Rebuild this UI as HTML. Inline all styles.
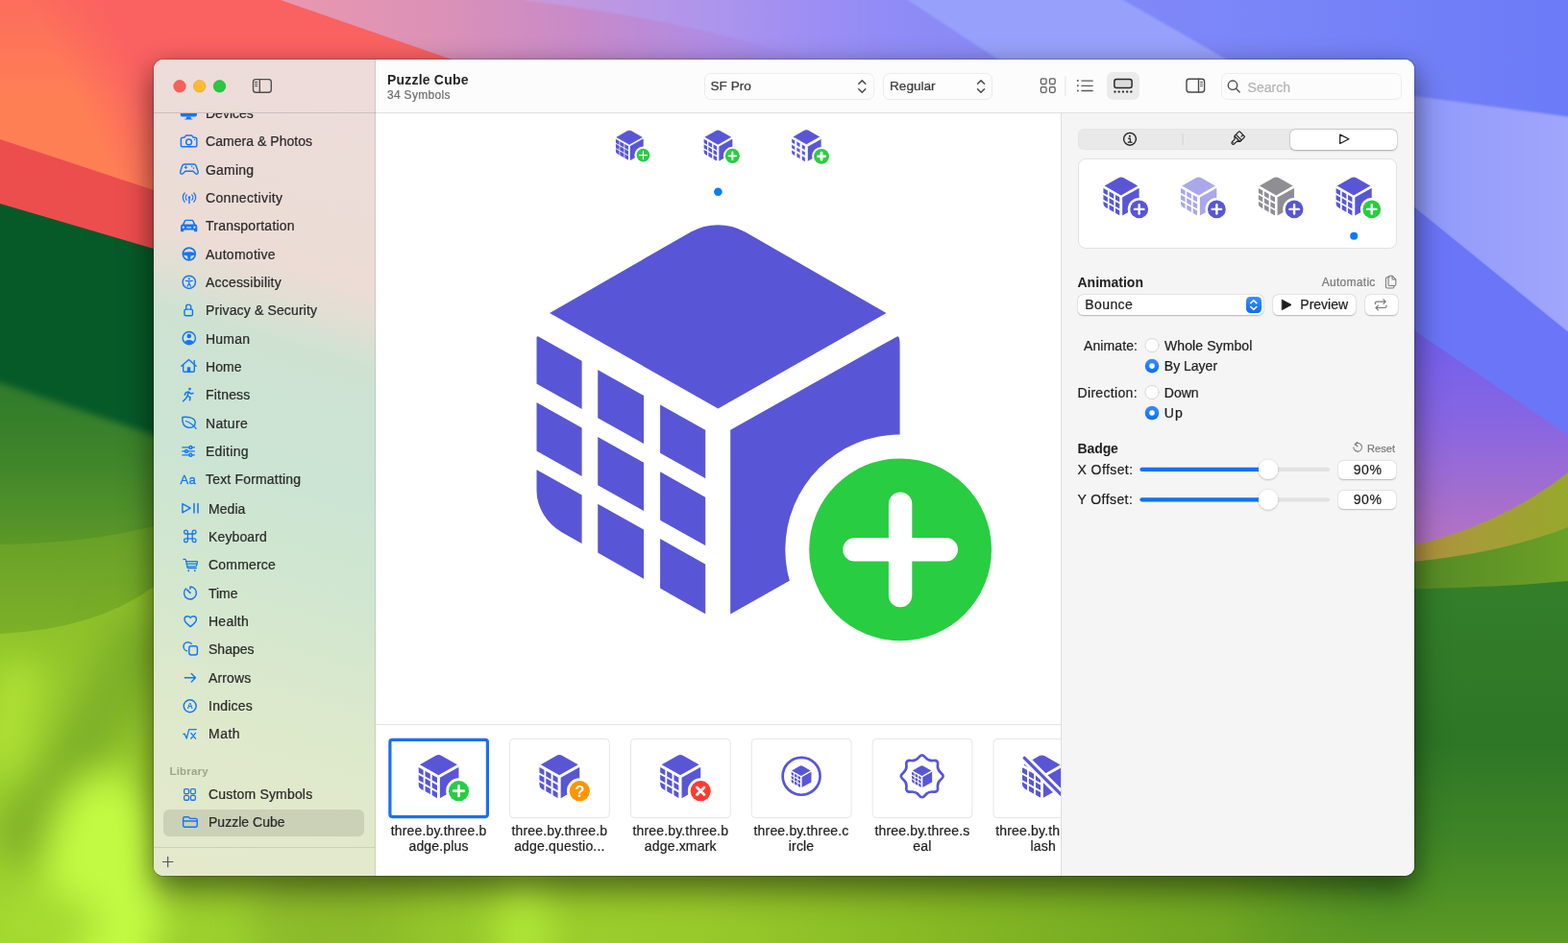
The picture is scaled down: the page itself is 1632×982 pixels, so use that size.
<!DOCTYPE html>
<html lang="en">
<head>
<meta charset="utf-8">
<title>SF Symbols – Puzzle Cube</title>
<style>
html,body{margin:0;padding:0}
body{width:1632px;height:982px;overflow:hidden;position:relative;background:#7682f8;font-family:"Liberation Sans",sans-serif;color:#262626;-webkit-text-stroke:.22px currentColor}
#bg{position:absolute;left:0;top:0;width:1632px;height:982px;display:block}
#shadow{position:absolute;left:160px;top:62px;width:1312px;height:850px;border-radius:10px;box-shadow:0 15px 32px 2px rgba(0,0,0,.42),0 3px 24px rgba(0,0,0,.15),0 0 0 1px rgba(0,0,0,.18)}
#win{position:absolute;left:160px;top:62px;width:1312px;height:850px;border-radius:10px;overflow:hidden;background:#fff;will-change:transform}
.abs{position:absolute}
svg{display:block}
/* sidebar */
#sidebar{position:absolute;left:0;top:0;width:231px;height:850px;overflow:hidden;
background:linear-gradient(197deg,#eddcda 0%,#ecdcd5 26.5%,#dfdfd3 31%,#cfe2d2 35%,#cbe4d3 50%,#d3e7cf 65%,#dee9cb 80%,#e5e9cc 100%)}
#sidebar .edge{position:absolute;left:230px;top:0;width:1px;height:850px;background:rgba(0,0,0,.10)}
#sbtop{position:absolute;left:0;top:0;width:231px;height:55px;border-bottom:1px solid rgba(0,0,0,.13)}
#sblist{position:absolute;left:0;top:56px;width:231px;height:794px;overflow:hidden}
.row{position:absolute;left:54px;height:20px;line-height:20px;font-size:14px;color:#2a2a2a;white-space:nowrap}
.row.s{left:57px}
#sbicons{position:absolute;left:0;top:0}
.sel{position:absolute;left:10px;top:724.5px;width:209px;height:28.5px;border-radius:6px;background:rgba(0,0,0,.10)}
.lib{-webkit-text-stroke:0;position:absolute;left:16.5px;top:677px;letter-spacing:.2px;font-size:11.5px;font-weight:bold;color:rgba(60,70,50,.42);line-height:16px}
#sbfoot{position:absolute;left:0;width:230px;height:1px;background:rgba(0,0,0,.10)}
/* toolbar */
#toolbar{position:absolute;left:231px;top:0;width:1081px;height:55px;background:#fcfcfc;border-bottom:1px solid #e0e0e0}
.ttl{-webkit-text-stroke:0;position:absolute;left:12px;top:11px;letter-spacing:.2px;font-size:14px;font-weight:bold;line-height:20px;color:#262626;white-space:nowrap}
.sub{position:absolute;left:12px;top:29px;letter-spacing:.3px;font-size:12px;line-height:16px;color:#6e6e6e;white-space:nowrap}
.pop{position:absolute;top:13.5px;height:28px;border:1px solid #ececec;border-radius:7px;background:#fdfdfd;box-sizing:border-box;font-size:13.6px;line-height:26px;color:#3a3a3a;padding-left:6px;white-space:nowrap}
.srch{font-size:14px;line-height:20px;color:#b4b4b4;white-space:nowrap}
/* main */
#canvas{position:absolute;left:231px;top:56px;width:713px;height:794px;background:#fff;overflow:hidden}
.lbl{position:absolute;top:738.5px;width:124.5px;text-align:center;font-size:14px;line-height:16.6px;color:#1e1e1e;white-space:nowrap;letter-spacing:.17px}
#inspector{position:absolute;left:944px;top:56px;width:368px;height:794px;background:#f5f5f5;border-left:1px solid #dcdcdc;box-sizing:border-box;overflow:hidden}
</style>
</head>
<body>
<svg id="bg" width="1632" height="982" viewBox="0 0 1632 982">
<defs>
<linearGradient id="gTop" x1="0" y1="0" x2="1632" y2="0" gradientUnits="userSpaceOnUse">
<stop offset="0" stop-color="#e897ae"/><stop offset=".184" stop-color="#e897ae"/><stop offset=".276" stop-color="#dc92b6"/><stop offset=".368" stop-color="#c88ac8"/><stop offset=".441" stop-color="#b38be0"/><stop offset=".509" stop-color="#9e8cf3"/><stop offset=".576" stop-color="#8e8bf6"/><stop offset=".797" stop-color="#7a86f8"/><stop offset="1" stop-color="#6b7bf7"/>
</linearGradient>
<linearGradient id="gBandR" x1="1400" y1="0" x2="1632" y2="0" gradientUnits="userSpaceOnUse"><stop offset="0" stop-color="#8895fa"/><stop offset="1" stop-color="#a1a6fc"/></linearGradient>
<linearGradient id="gPurple" x1="0" y1="340" x2="0" y2="575" gradientUnits="userSpaceOnUse"><stop offset="0" stop-color="#6f5ff0"/><stop offset=".45" stop-color="#8a66e0"/><stop offset="1" stop-color="#b874c0"/></linearGradient>
<linearGradient id="gOlive" x1="1440" y1="0" x2="1632" y2="0" gradientUnits="userSpaceOnUse"><stop offset="0" stop-color="#b48845"/><stop offset=".5" stop-color="#a69c38"/><stop offset="1" stop-color="#98a82c"/></linearGradient>
<linearGradient id="gMidG" x1="1440" y1="0" x2="1632" y2="0" gradientUnits="userSpaceOnUse"><stop offset="0" stop-color="#4f8426"/><stop offset="1" stop-color="#6ba126"/></linearGradient>
<linearGradient id="gDarkR" x1="0" y1="600" x2="0" y2="982" gradientUnits="userSpaceOnUse"><stop offset="0" stop-color="#347f2a"/><stop offset=".45" stop-color="#2d7626"/><stop offset=".72" stop-color="#3f8526"/><stop offset="1" stop-color="#5c9a24"/></linearGradient>
<linearGradient id="gOrange" x1="150" y1="80" x2="85" y2="112" gradientUnits="userSpaceOnUse"><stop offset="0" stop-color="#fa6161"/><stop offset="1" stop-color="#ff7f55"/></linearGradient>
<linearGradient id="gLeftG" x1="0" y1="400" x2="0" y2="982" gradientUnits="userSpaceOnUse"><stop offset="0" stop-color="#3d892c"/><stop offset=".28" stop-color="#6aa428"/><stop offset=".45" stop-color="#82b728"/><stop offset=".7" stop-color="#9acc2c"/><stop offset="1" stop-color="#a4d82e"/></linearGradient>
<linearGradient id="gBottom" x1="0" y1="0" x2="1632" y2="0" gradientUnits="userSpaceOnUse"><stop offset="0" stop-color="#9cd02e"/><stop offset=".19" stop-color="#9cd02e"/><stop offset=".25" stop-color="#90c02a"/><stop offset=".33" stop-color="#9ccf2e"/><stop offset=".45" stop-color="#98c92b"/><stop offset=".6" stop-color="#86b824"/><stop offset=".78" stop-color="#6fa622"/><stop offset=".82" stop-color="#66a022" stop-opacity=".8"/><stop offset=".89" stop-color="#5a9824" stop-opacity="0"/><stop offset="1" stop-color="#4e8a22" stop-opacity="0"/></linearGradient>
<radialGradient id="gGlow" cx="112" cy="905" r="170" gradientUnits="userSpaceOnUse"><stop offset="0" stop-color="#c2fa42"/><stop offset=".5" stop-color="#b8f03c" stop-opacity=".8"/><stop offset="1" stop-color="#a0d42e" stop-opacity="0"/></radialGradient>
<linearGradient id="gLeftA" x1="0" y1="400" x2="0" y2="580" gradientUnits="userSpaceOnUse"><stop offset="0" stop-color="#2f7a2a"/><stop offset=".45" stop-color="#3f8529"/><stop offset="1" stop-color="#609b28"/></linearGradient>
<linearGradient id="gLeftC" x1="0" y1="610" x2="0" y2="800" gradientUnits="userSpaceOnUse"><stop offset="0" stop-color="#8cbf2a"/><stop offset="1" stop-color="#9cd02e"/></linearGradient>
<linearGradient id="gLeftB" x1="0" y1="550" x2="0" y2="670" gradientUnits="userSpaceOnUse"><stop offset="0" stop-color="#67a028"/><stop offset="1" stop-color="#7eb228"/></linearGradient>
<filter id="b18" x="-50%" y="-50%" width="200%" height="200%"><feGaussianBlur stdDeviation="18"/></filter>
<linearGradient id="gLav" x1="545" y1="0" x2="960" y2="0" gradientUnits="userSpaceOnUse"><stop offset="0" stop-color="#c79fe2" stop-opacity=".75"/><stop offset=".5" stop-color="#ab97f0" stop-opacity=".8"/><stop offset="1" stop-color="#8e8bf6" stop-opacity="0"/></linearGradient>
<linearGradient id="gCorFade" x1="0" y1="0" x2="0" y2="100" gradientUnits="userSpaceOnUse"><stop offset="0" stop-color="#fa6161" stop-opacity=".6"/><stop offset="1" stop-color="#fa6161" stop-opacity="0"/></linearGradient>
<filter id="b5" x="-5%" y="-5%" width="110%" height="110%"><feGaussianBlur stdDeviation="3.5"/></filter>
<filter id="b2" x="-5%" y="-5%" width="110%" height="110%"><feGaussianBlur stdDeviation="1.2"/></filter>
</defs>
<rect x="0" y="0" width="1632" height="982" fill="url(#gTop)"/>
<path d="M545,0Q720,22 850,64L1000,64V-20H545Z" fill="url(#gLav)" filter="url(#b2)"/>
<polygon points="915,-20 1134,-20 1169,0 1395,130 1142,130 945,0" fill="#97a1fb" filter="url(#b2)"/>
<polygon points="1380,86 1472,100 1632,121.5 1700,130 1700,401 1632,346 1472,216 1380,150" fill="url(#gBandR)" filter="url(#b2)"/>
<polygon points="1380,150 1472,216 1632,346 1632,453 1472,344 1380,282" fill="#6b75f7"/>
<polygon points="1380,282 1472,344 1632,453 1632,640 1380,640" fill="url(#gPurple)"/>
<path d="M1380,582 L1400,580 Q1540,565 1632,492 L1632,640 L1380,640Z" fill="url(#gOlive)"/>
<path d="M1380,591 L1400,590 Q1540,585 1632,549 L1632,660 L1380,660Z" fill="url(#gMidG)"/>
<path d="M1200,614L1380,614Q1540,614 1632,605L1632,982L1200,982Z" fill="url(#gDarkR)"/>
<polygon points="0,0 292,0 700,142 700,420 0,420" fill="#fa6161"/>
<polygon points="0,0 150,0 330,260 0,260" fill="url(#gOrange)"/>
<rect x="0" y="0" width="260" height="110" fill="url(#gCorFade)"/>
<polygon points="0,145 160,198 460,297 460,420 0,420" fill="#ec4e4e"/>
<polygon points="0,212 160,259 460,347 460,900 0,900" fill="#065a28"/>
<rect x="298" y="880" width="1334" height="102" fill="url(#gBottom)"/>
<path d="M-20,392L160,453L285,495V700H-20Z" fill="url(#gLeftA)" filter="url(#b5)"/>
<path d="M0,567Q90,566 160,548L302,520V982H0Z" fill="url(#gLeftB)"/>
<path d="M0,660Q100,655 160,611L302,540V982H0Z" fill="url(#gLeftC)"/>
<g filter="url(#b18)"><path d="M150,650Q110,760 10,890" stroke="#78aa26" stroke-width="62" fill="none" opacity=".8"/><path d="M25,690Q10,740 0,800" stroke="#aee036" stroke-width="50" fill="none"/><ellipse cx="108" cy="925" rx="62" ry="120" fill="#c2f942"/><ellipse cx="40" cy="965" rx="60" ry="40" fill="#a6da32"/>
<ellipse cx="545" cy="965" rx="28" ry="70" fill="#b4ea38" opacity=".8"/><ellipse cx="330" cy="960" rx="70" ry="60" fill="#86b428" opacity=".7"/></g>
</svg>
<div id="shadow"></div>
<div id="win">
<div id="sidebar">
<div id="sblist">
<div class="row" style="top:-10.0px">Devices</div>
<div class="row" style="top:19.4px;letter-spacing:0.04px">Camera &amp; Photos</div>
<div class="row" style="top:48.7px;letter-spacing:0.18px">Gaming</div>
<div class="row" style="top:78.0px;letter-spacing:0.35px">Connectivity</div>
<div class="row" style="top:107.4px;letter-spacing:0.22px">Transportation</div>
<div class="row" style="top:136.7px;letter-spacing:0.28px">Automotive</div>
<div class="row" style="top:166.0px;letter-spacing:0.20px">Accessibility</div>
<div class="row" style="top:195.4px;letter-spacing:0.14px">Privacy &amp; Security</div>
<div class="row" style="top:224.7px;letter-spacing:0.20px">Human</div>
<div class="row" style="top:254.0px;letter-spacing:0.07px">Home</div>
<div class="row" style="top:283.3px;letter-spacing:0.20px">Fitness</div>
<div class="row" style="top:312.7px;letter-spacing:0.34px">Nature</div>
<div class="row" style="top:342.0px;letter-spacing:0.28px">Editing</div>
<div class="row" style="top:371.3px;letter-spacing:0.18px">Text Formatting</div>
<div class="row s" style="top:401.7px;letter-spacing:0.07px">Media</div>
<div class="row s" style="top:431.0px;letter-spacing:0.13px">Keyboard</div>
<div class="row s" style="top:460.3px;letter-spacing:0.19px">Commerce</div>
<div class="row s" style="top:489.6px;letter-spacing:-0.03px">Time</div>
<div class="row s" style="top:519.0px;letter-spacing:0.24px">Health</div>
<div class="row s" style="top:548.3px;letter-spacing:0.02px">Shapes</div>
<div class="row s" style="top:577.6px;letter-spacing:0.14px">Arrows</div>
<div class="row s" style="top:607.0px;letter-spacing:0.25px">Indices</div>
<div class="row s" style="top:636.3px;letter-spacing:0.50px">Math</div>
<div class="lib">Library</div>
<div class="sel"></div>
<div class="row s" style="top:699.4px;letter-spacing:0.18px">Custom Symbols</div>
<div class="row s" style="top:728.4px;letter-spacing:0.02px">Puzzle Cube</div>
<div id="sbfoot" style="top:764.0px"></div>
<svg id="sbicons" width="231" height="794" viewBox="160 118 231 794" fill="none" stroke="#1476f3" stroke-width="1.45" stroke-linecap="round" stroke-linejoin="round">
<defs><clipPath id="cpHum"><circle cx="196.8" cy="352.1" r="6.2"/></clipPath></defs>
<!-- devices (clipped by toolbar) -->
<g fill="#1476f3" stroke="none"><rect x="187.8" y="108" width="17.1" height="13.6" rx="1.8"/><path d="M194.4,121.5h3.9l.9,2.2h1.2v.9h-8.1v-.9h1.2z"/></g>
<!-- camera -->
<path d="M190.3,143.2h1.7l1.1,-1.6q.3,-.5 1,-.5h5q.7,0 1,.5l1.1,1.6h1.7q1.9,0 1.9,1.9v5.8q0,1.9 -1.9,1.9h-12.6q-1.9,0 -1.9,-1.9v-5.8q0,-1.9 1.9,-1.9z"/>
<circle cx="196.6" cy="147.9" r="2.9"/><circle cx="202.5" cy="145.4" r=".75" fill="#1476f3" stroke="none"/>
<!-- gamepad -->
<path d="M192.3,170.9h9.2q1.9,0 2.5,1.7l2,5.6q.5,1.6 -.3,2.5q-1,1 -2.2,0l-2.6,-2.5h-8l-2.6,2.5q-1.2,1 -2.2,0q-.8,-.9 -.3,-2.5l2,-5.6q.6,-1.700 2.500,-1.700z"/>
<path d="M193.4,172.9v2.600M192.100,174.2h2.600" stroke-width="1.1"/><circle cx="199.700" cy="173.300" r=".8" fill="#1476f3" stroke="none"/><circle cx="201.500" cy="175.100" r=".8" fill="#1476f3" stroke="none"/>
<!-- antenna -->
<path d="M197,206.600v5"/><circle cx="197" cy="205.600" r="1.250" fill="#1476f3" stroke="none"/>
<path d="M194.300,203a3.700,3.700 0 0 0 0,5.200M199.700,203a3.700,3.700 0 0 1 0,5.200M192.200,201a6.600,6.600 0 0 0 0,9.200M201.800,201a6.600,6.600 0 0 1 0,9.200" stroke-width="1.250"/>
<!-- car -->
<path fill="#1476f3" stroke="none" fill-rule="evenodd" d="M190,233.600l1.600,-3.600q.5,-1.200 1.900,-1.200h6.300q1.400,0 1.900,1.200l1.600,3.600q2,.3 2,2.300v3.400v1.200q0,.7 -.7,.7h-1.900q-.7,0 -.7,-.7v-.9h-10.700v.9q0,.7 -.7,.7h-1.900q-.7,0 -.7,-.7v-1.200v-3.400q0,-2 2,-2.300zM191.800,233.400h9.700l-1.200,-2.800q-.2,-.5 -.8,-.5h-5.700q-.6,0 -.8,.5zM190.900,235.500a1.100,1.100 0 1 0 .01,0zM202.400,235.500a1.100,1.100 0 1 0 .01,0zM194.300,236.300h4.700v1.100h-4.700z"/>
<!-- steering wheel -->
<circle cx="196.800" cy="264.500" r="6.400" stroke-width="1.800"/>
<path fill="#1476f3" stroke="none" d="M190.800,263.200q6,-2 12,0v2.300l-4.300,1.100l-.6,4.500h-2.200l-.6,-4.500l-4.300,-1.100z"/>
<!-- accessibility -->
<circle cx="196.800" cy="293.800" r="6.650"/>
<circle cx="196.800" cy="290.400" r="1.050" fill="#1476f3" stroke="none"/>
<path d="M193.300,292.400l3.500,.5l3.500,-.5M196.800,292.900v2l-1.700,3.300M196.800,294.900l1.700,3.300" stroke-width="1.150"/>
<!-- lock -->
<rect x="191.950" y="322.100" width="8.500" height="6.600" rx="1.500"/>
<path d="M193.700,322v-2.400a2.500,2.500 0 0 1 5,0v2.400"/>
<!-- human -->
<circle cx="196.800" cy="352.100" r="6.650"/>
<circle cx="196.800" cy="350" r="2.300" fill="#1476f3" stroke="none"/>
<ellipse cx="196.800" cy="358" rx="5.200" ry="4" fill="#1476f3" stroke="none" clip-path="url(#cpHum)"/>
<!-- home -->
<path d="M188.800,381.200l7.700,-6.700l7.700,6.700M202.200,375.400v3" stroke-width="1.400"/>
<path d="M190.700,380v6.200q0,1.100 1.100,1.100h9.400q1.100,0 1.100,-1.100v-6.200" stroke-width="1.400"/>
<rect x="194.800" y="382.300" width="3.400" height="5" fill="#1476f3" stroke="none"/>
<!-- runner -->
<circle cx="197.500" cy="405.100" r="1.350" fill="#1476f3" stroke="none"/>
<path d="M192.300,411.200l1.300,-2.500l2.800,-.6l2.300,1.900l2.400,-.5M196.400,408.100l-1.300,4.100l3,1.600l-.7,2.900M195.100,412.200l-1.600,2.800l-2.900,2.800" stroke-width="1.500"/>
<!-- leaf -->
<path d="M189.800,434.500c5,-.6 13.200,-.2 13.400,5.600c.1,4 -3.600,5.700 -7,5.200c-4.800,-.7 -6.700,-5.200 -6.400,-10.800z"/>
<path d="M193.400,438.500c4,1.300 8,4.200 10.700,7.800" stroke-width="1.300"/>
<!-- sliders -->
<path d="M189.800,465.900h12.600M189.800,469.900h12.600M189.800,473.800h12.600" stroke-width="1.300"/>
<g fill="#d0e5d2"><circle cx="198.400" cy="465.900" r="1.450"/><circle cx="194" cy="469.900" r="1.450"/><circle cx="198.400" cy="473.800" r="1.450"/></g>
<!-- Aa -->
<text x="187.500" y="503.600" font-family="Liberation Sans, sans-serif" font-size="13" fill="#1476f3" stroke="#1476f3" stroke-width=".3" letter-spacing=".3">Aa</text>
<!-- play pause -->
<path d="M189.900,524.600l8.300,4.600l-8.300,4.600z"/><path d="M202,524.400v9.600M206,524.400v9.600" stroke-width="1.500"/>
<!-- command -->
<path d="M195.400,556h4.800v4.800h-4.800zM195.400,556h-1.900a1.900,1.900 0 1 1 1.900,-1.900zM200.200,556v-1.900a1.900,1.900 0 1 1 1.900,1.900zM200.200,560.800h1.900a1.900,1.900 0 1 1 -1.900,1.900zM195.400,560.800v1.900a1.900,1.900 0 1 1 -1.900,-1.900z" stroke-width="1.300"/>
<!-- cart -->
<path d="M191,582.400h1.700q.5,0 .6,.5l1.800,8.200q.1,.6 .7,.6h8.600M193.700,584.600h11.300q.7,0 .5,.7l-1,3.900q-.2,.6 -.8,.6h-8.900M194.300,587.200h10.700" stroke-width="1.250"/>
<circle cx="196.200" cy="594.200" r=".95" fill="#1476f3" stroke="none"/><circle cx="202.800" cy="594.200" r=".95" fill="#1476f3" stroke="none"/>
<!-- timer -->
<path d="M198,611.050a6.450,6.450 0 1 1 -4.560,1.890M198,611.050v2.300"/><path d="M198,617.500l-3.200,-3.300" stroke-width="1.700"/>
<!-- heart -->
<path d="M198.200,652.600c-3.300,-2.400 -6.200,-4.800 -6.200,-7.500c0,-2 1.500,-3.400 3.200,-3.400c1.300,0 2.400,.7 3,1.800c.6,-1.100 1.700,-1.800 3,-1.800c1.700,0 3.200,1.400 3.200,3.400c0,2.700 -2.900,5.100 -6.200,7.500z"/>
<!-- shapes -->
<circle cx="195.600" cy="673.300" r="4.600"/>
<rect x="196.800" y="672.800" width="8.600" height="9.200" rx="2.200" fill="#dbe8cd" stroke="#dbe8cd" stroke-width="3.400"/>
<rect x="196.800" y="672.800" width="8.600" height="9.200" rx="2.200"/>
<!-- arrow -->
<path d="M192.300,705.800h11M199.300,701.600l4.200,4.200l-4.200,4.200" stroke-width="1.400"/>
<!-- indices -->
<circle cx="197.700" cy="735.200" r="6.450"/>
<text x="197.700" y="738.200" text-anchor="middle" font-family="Liberation Sans, sans-serif" font-weight="bold" font-size="8.400" fill="#1476f3" stroke="none">A</text>
<!-- sqrt x -->
<path d="M190.900,764.700l1.300,-.5l2,4.900l2.500,-9.500h7.600" stroke-width="1.300"/><path d="M198.800,763.400l4.700,5.800M203.500,763.400l-4.700,5.800" stroke-width="1.300"/>
<!-- grid -->
<g stroke-width="1.300"><rect x="191.650" y="821.650" width="4.900" height="4.900" rx="1.300"/><rect x="198.450" y="821.650" width="4.900" height="4.900" rx="1.300"/><rect x="191.650" y="828.350" width="4.900" height="4.900" rx="1.300"/><rect x="198.450" y="828.350" width="4.900" height="4.900" rx="1.300"/></g>
<!-- folder -->
<path d="M190.650,852.400a1.750,1.750 0 0 1 1.750,-1.750h3.300q.7,0 1.100,.5l.7,.8q.4,.4 1,.4h5q1.750,0 1.750,1.750v5.300a1.750,1.750 0 0 1 -1.750,1.750h-11.100a1.750,1.750 0 0 1 -1.750,-1.750zM190.650,854.900h14.600"/>
<!-- plus -->
<path d="M169.500,897.500h10.400M174.700,892.300v10.400" stroke="#555" stroke-width="1.200"/>
</svg>

</div>
<div id="sbtop"><svg width="231" height="55" viewBox="160 62 231 55" style="position:absolute;left:0;top:0">
<circle cx="187" cy="89.800" r="6.250" fill="#fe5f57" stroke="#e0443e" stroke-width=".6"/>
<circle cx="207.700" cy="89.800" r="6.250" fill="#febc2e" stroke="#dea123" stroke-width=".6"/>
<circle cx="228.500" cy="89.800" r="6.250" fill="#28c840" stroke="#1aab29" stroke-width=".6"/>
<g fill="none" stroke="#4d4d4d" stroke-width="1.350" stroke-linecap="round"><rect x="263.500" y="82.600" width="18.800" height="13.700" rx="2.800"/><path d="M270.300,82.600v13.700"/><path d="M265.500,85.500h2.200M265.500,87.600h2.200M265.500,89.700h2.200" stroke-width="1"/></g>
</svg>
</div>
<div class="edge"></div>
</div>
<div id="toolbar">
<div class="ttl">Puzzle Cube</div>
<div class="sub">34 Symbols</div>
<div class="pop" style="left:341.5px;width:177px">SF Pro</div>
<div class="pop" style="left:528px;width:114px">Regular</div>
<div class="abs" style="left:760.5px;top:13px;width:34.5px;height:29px;border-radius:6.5px;background:#ebebeb"></div>
<div class="abs" style="left:880px;top:13.600px;width:188px;height:28.600px;box-sizing:border-box;border:1px solid #ececec;border-radius:6.500px;background:#fcfcfc"></div>
<div class="abs srch" style="left:907.600px;top:19.400px">Search</div>
<svg class="abs" style="left:0;top:0" width="1081" height="55" viewBox="391 62 1081 55" fill="none" stroke-linecap="round" stroke-linejoin="round">
<g stroke="#4a4a4a" stroke-width="1.500"><path d="M893.800,87.300l3.500,-3.400l3.500,3.400M893.800,92.800l3.500,3.400l3.500,-3.400"/><path d="M1017.500,87.300l3.500,-3.400l3.500,3.400M1017.500,92.800l3.500,3.400l3.500,-3.400"/></g>
<g stroke="#5a5a5a" stroke-width="1.300"><rect x="1083.350" y="81.850" width="5.700" height="5.700" rx="1.500"/><rect x="1092.450" y="81.850" width="5.700" height="5.700" rx="1.500"/><rect x="1083.350" y="90.600" width="5.700" height="5.700" rx="1.500"/><rect x="1092.450" y="90.600" width="5.700" height="5.700" rx="1.500"/></g>
<path d="M1108.900,80v20" stroke="#e4e4e4" stroke-width="1"/>
<g stroke="#5a5a5a" stroke-width="1.300"><path d="M1125.800,84.100h11.400M1125.800,89.300h11.400M1125.800,94.500h11.400"/></g>
<g fill="#5a5a5a"><circle cx="1121.800" cy="84.100" r="1"/><circle cx="1121.800" cy="89.300" r="1"/><circle cx="1121.800" cy="94.500" r="1"/></g>
<rect x="1159.800" y="82.500" width="18.300" height="9" rx="2.300" fill="#dcdcdc" stroke="#262626" stroke-width="1.450"/>
<g fill="#262626"><rect x="1159.400" y="94.500" width="2.100" height="2.100" rx=".5"/><rect x="1163.600" y="94.500" width="2.100" height="2.100" rx=".5"/><rect x="1167.850" y="94.500" width="2.100" height="2.100" rx=".5"/><rect x="1172.100" y="94.500" width="2.100" height="2.100" rx=".5"/><rect x="1176.300" y="94.500" width="2.100" height="2.100" rx=".5"/></g>
<g stroke="#4a4a4a" stroke-width="1.400"><rect x="1235" y="82.300" width="18.600" height="13.700" rx="2.700"/><path d="M1247.500,82.300v13.700"/><path d="M1249.500,85.500h2.100M1249.500,87.600h2.100M1249.500,89.700h2.100" stroke-width=".9"/></g>
<g stroke="#4a4a4a" stroke-width="1.350"><circle cx="1283" cy="88.700" r="4.700"/><path d="M1286.500,92.200l3.700,3.700"/></g>
</svg>
</div>
<svg width="0" height="0" style="position:absolute">
<defs>
<g id="cubeTop"><path d="M13.800,92.500L160.800,8A58,58 0 0 1 217.200,8L364.200,92.500L189.100,192.100Z"/></g>
<clipPath id="cubeLeftClip"><path d="M0,118.400A1.500,1.500 0 0 1 2.200,117.050L176.200,214.600V406.100L26,320.400A52,52 0 0 1 0,277.500Z"/></clipPath>
<g id="cubeLeft" clip-path="url(#cubeLeftClip)">
<path d="M0.0,85.8L47.3,112.3V192.5L0.0,166.0ZM0.0,185.6L47.3,212.1V262.5L0.0,236.0ZM0.0,255.4L47.3,281.9V372.3L0.0,345.8Z"/>
<path d="M63.9,121.6L111.7,148.4V228.6L63.9,201.8ZM63.9,221.4L111.7,248.2V298.6L63.9,271.8ZM63.9,291.2L111.7,318.0V408.4L63.9,381.6Z"/>
<path d="M128.8,158.0L176.2,184.6V264.8L128.8,238.2ZM128.8,257.8L176.2,284.4V334.8L128.8,308.2ZM128.8,327.6L176.2,354.2V444.6L128.8,418.0Z"/>
</g>
<g id="cubeRight"><path d="M201.900,214.300L375.300,116.900Q378.300,115.600 378.300,126V306.400L201.900,406.100Z"/></g>
<clipPath id="cubeRightClip"><path clip-rule="evenodd" d="M180,90H400V430H180ZM498.600,338.800A119.800,119.800 0 1 0 259,338.800A119.800,119.800 0 1 0 498.600,338.800Z"/></clipPath>
<g id="badgeDisc"><circle cx="378.800" cy="338.800" r="94.900"/></g>
<g id="badgePlus"><path d="M331.100,338.800h95.400M378.800,291.100v95.400" fill="none" stroke="#fff" stroke-width="24.400" stroke-linecap="round"/></g>
<g id="cubeBody"><use href="#cubeTop"/><use href="#cubeLeft"/><g clip-path="url(#cubeRightClip)"><use href="#cubeRight"/></g></g>
<g id="cubeBodyFull"><use href="#cubeTop"/><use href="#cubeLeft"/><use href="#cubeRight"/></g>
</defs>
</svg>
<div id="canvas">
<svg class="abs" style="left:0;top:0" width="713" height="794" viewBox="391 118 713 794">
<g transform="translate(558.300,233.500)"><g fill="#5856d6"><use href="#cubeBody"/></g><g fill="#28cd41"><use href="#badgeDisc"/></g><use href="#badgePlus"/></g>
<circle cx="747.400" cy="199.700" r="4.300" fill="#0a7aff"/>
<g transform="translate(640.70,135.90) scale(0.0759)"><g fill="#5856d6" stroke="#5856d6" stroke-width="7" stroke-linejoin="round"><use href="#cubeBody"/></g><circle cx="378.800" cy="338.800" r="90" fill="#28cd41"/><path d="M326.9,338.800h103.8M378.800,286.9v103.8" fill="none" stroke="#fff" stroke-width="16" stroke-linecap="round"/></g>
<g transform="translate(732.30,135.50) scale(0.0793)"><g fill="#5856d6"><use href="#cubeBody"/></g><g fill="#28cd41"><use href="#badgeDisc"/></g><use href="#badgePlus"/></g>
<g transform="translate(823.70,134.80) scale(0.0827)"><g fill="#5856d6" stroke="#fff" stroke-width="9" stroke-linejoin="round"><use href="#cubeBody"/></g><circle cx="378.800" cy="338.800" r="96" fill="#28cd41"/><path d="M335.9,338.800h85.8M378.800,295.9v85.8" fill="none" stroke="#fff" stroke-width="34" stroke-linecap="round"/></g>
<rect x="405.90" y="770.400" width="101.500" height="80.200" rx="2.500" fill="#fff" stroke="#1a6ff5" stroke-width="3.200"/>
<rect x="530.60" y="769.400" width="103.700" height="82.200" rx="4" fill="#fff" stroke="#e6e6e6" stroke-width="1"/>
<rect x="656.50" y="769.400" width="103.700" height="82.200" rx="4" fill="#fff" stroke="#e6e6e6" stroke-width="1"/>
<rect x="782.30" y="769.400" width="103.700" height="82.200" rx="4" fill="#fff" stroke="#e6e6e6" stroke-width="1"/>
<rect x="908.20" y="769.400" width="103.700" height="82.200" rx="4" fill="#fff" stroke="#e6e6e6" stroke-width="1"/>
<rect x="1034.00" y="769.400" width="103.700" height="82.200" rx="4" fill="#fff" stroke="#e6e6e6" stroke-width="1"/>
<g transform="translate(435.40,786.00) scale(0.1112)"><g fill="#5856d6"><use href="#cubeBody"/></g><g fill="#28cd41"><use href="#badgeDisc"/></g><use href="#badgePlus"/></g>
<g transform="translate(561.20,786.00) scale(0.1112)"><g fill="#5856d6"><use href="#cubeBody"/></g><g fill="#ff9500"><use href="#badgeDisc"/></g><text x="378.800" y="392.600" text-anchor="middle" font-family="Liberation Sans, sans-serif" font-weight="bold" font-size="150" fill="#fff" stroke="none">?</text></g>
<g transform="translate(687.10,786.00) scale(0.1112)"><g fill="#5856d6"><use href="#cubeBody"/></g><g fill="#ff3b30"><use href="#badgeDisc"/></g><path d="M345,305l67.600,67.600M412.600,305l-67.600,67.600" fill="none" stroke="#fff" stroke-width="24.400" stroke-linecap="round"/></g>
<circle cx="834.100" cy="808.300" r="19.450" fill="none" stroke="#5856d6" stroke-width="2.700"/>
<g transform="translate(823.30,797.30) scale(0.0559)"><g fill="#5856d6"><use href="#cubeBodyFull"/></g></g>
<path d="M962.92,788.48Q966.15,792.73 971.44,792.00Q976.73,791.27 976.00,796.56Q975.27,801.85 979.52,805.08Q983.78,808.30 979.52,811.52Q975.27,814.75 976.00,820.04Q976.73,825.33 971.44,824.60Q966.15,823.87 962.92,828.12Q959.70,832.38 956.48,828.12Q953.25,823.87 947.96,824.60Q942.67,825.33 943.40,820.04Q944.13,814.75 939.88,811.52Q935.62,808.30 939.88,805.08Q944.13,801.85 943.40,796.56Q942.67,791.27 947.96,792.00Q953.25,792.73 956.48,788.48Q959.70,784.22 962.92,788.48Z" fill="none" stroke="#5856d6" stroke-width="2.700" stroke-linejoin="round"/>
<g transform="translate(949.00,797.30) scale(0.0559)"><g fill="#5856d6"><use href="#cubeBodyFull"/></g></g>
<g transform="translate(1063.90,786.50) scale(0.1089)"><g fill="#5856d6"><use href="#cubeBodyFull"/></g></g>
<path d="M1066.300,789.300l46,46" stroke="#fff" stroke-width="8.800" stroke-linecap="round" fill="none"/>
<path d="M1066.300,789.300l46,46" stroke="#5856d6" stroke-width="3.200" stroke-linecap="round" fill="none"/>
</svg>
<div class="abs" style="left:0;top:636px;width:713px;height:1px;background:#e2e2e2"></div>
<div class="lbl" style="left:3.3px">three.by.three.b<br>adge.plus</div>
<div class="lbl" style="left:129.1px">three.by.three.b<br>adge.questio...</div>
<div class="lbl" style="left:255.0px">three.by.three.b<br>adge.xmark</div>
<div class="lbl" style="left:380.8px">three.by.three.c<br>ircle</div>
<div class="lbl" style="left:506.7px">three.by.three.s<br>eal</div>
<div class="lbl" style="left:632.5px">three.by.three.s<br>lash</div>
</div>
<div id="inspector">
<div class="abs" style="left:17.0px;top:15.8px;width:332px;height:22.600px;border-radius:6px;background:#e9e9e9;box-shadow:inset 0 0 0 .5px rgba(0,0,0,.04)"></div>
<div class="abs" style="left:238.3px;top:16.5px;width:110.600px;height:21.200px;border-radius:5.500px;background:#fff;box-shadow:0 .5px 2px rgba(0,0,0,.28),0 0 0 .5px rgba(0,0,0,.10)"></div>
<div class="abs" style="left:17.1px;top:47.3px;width:332.300px;height:93.600px;box-sizing:border-box;border-radius:8px;background:#fff;border:1px solid #e2e2e2"></div>
<div class="abs" style="left:16.9px;top:189.1px;width:193px;height:20.600px;border-radius:5.500px;background:#fff;box-shadow:0 .5px 1.500px rgba(0,0,0,.24),0 0 0 .5px rgba(0,0,0,.06)"></div>
<div class="abs" style="left:219.7px;top:189.1px;width:86.300px;height:20.600px;border-radius:5.500px;background:#fff;box-shadow:0 .5px 1.500px rgba(0,0,0,.24),0 0 0 .5px rgba(0,0,0,.06)"></div>
<div class="abs" style="left:315.6px;top:189.1px;width:34px;height:20.600px;border-radius:5.500px;background:#fff;box-shadow:0 .5px 1.500px rgba(0,0,0,.24),0 0 0 .5px rgba(0,0,0,.06)"></div>
<div class="abs" style="left:191.7px;top:191.1px;width:16.300px;height:16.800px;border-radius:4.500px;background:linear-gradient(#3b8ffa,#0a6ef5)"></div>
<div class="abs" style="left:288.3px;top:361.5px;width:60.200px;height:19.600px;border-radius:5px;background:#fff;box-shadow:0 .5px 1.500px rgba(0,0,0,.22),0 0 0 .5px rgba(0,0,0,.05)"></div>
<div class="abs" style="left:288.3px;top:392.7px;width:60.200px;height:19.600px;border-radius:5px;background:#fff;box-shadow:0 .5px 1.500px rgba(0,0,0,.22),0 0 0 .5px rgba(0,0,0,.05)"></div>
<div class="abs" style="left:16.5px;top:166.0px;font-size:14px;line-height:20px;color:#1e1e1e;white-space:nowrap;font-weight:bold;-webkit-text-stroke:0">Animation</div>
<div class="abs" style="left:270.8px;top:166.0px;font-size:12px;line-height:20px;color:#7a7a7a;white-space:nowrap;letter-spacing:0.27px">Automatic</div>
<div class="abs" style="left:24.3px;top:189.1px;font-size:14px;line-height:20px;color:#1e1e1e;white-space:nowrap;letter-spacing:0.40px">Bounce</div>
<div class="abs" style="left:248.3px;top:189.1px;font-size:14px;line-height:20px;color:#1e1e1e;white-space:nowrap">Preview</div>
<div class="abs" style="left:23.0px;top:231.7px;font-size:14px;line-height:20px;color:#1e1e1e;white-space:nowrap;letter-spacing:0.10px">Animate:</div>
<div class="abs" style="left:107.0px;top:231.7px;font-size:14px;line-height:20px;color:#1e1e1e;white-space:nowrap;letter-spacing:0.10px">Whole Symbol</div>
<div class="abs" style="left:106.8px;top:253.2px;font-size:14px;line-height:20px;color:#1e1e1e;white-space:nowrap">By Layer</div>
<div class="abs" style="left:16.5px;top:280.6px;font-size:14px;line-height:20px;color:#1e1e1e;white-space:nowrap;letter-spacing:0.33px">Direction:</div>
<div class="abs" style="left:106.8px;top:280.6px;font-size:14px;line-height:20px;color:#1e1e1e;white-space:nowrap">Down</div>
<div class="abs" style="left:106.8px;top:302.1px;font-size:14px;line-height:20px;color:#1e1e1e;white-space:nowrap;letter-spacing:1.00px">Up</div>
<div class="abs" style="left:16.5px;top:339.3px;font-size:14px;line-height:20px;color:#1e1e1e;white-space:nowrap;font-weight:bold;-webkit-text-stroke:0;letter-spacing:-0.10px">Badge</div>
<div class="abs" style="left:318.0px;top:338.9px;font-size:11px;line-height:20px;color:#7a7a7a;white-space:nowrap;letter-spacing:0.10px">Reset</div>
<div class="abs" style="left:16.5px;top:360.6px;font-size:14px;line-height:20px;color:#1e1e1e;white-space:nowrap;letter-spacing:0.42px">X Offset:</div>
<div class="abs" style="left:16.5px;top:391.8px;font-size:14px;line-height:20px;color:#1e1e1e;white-space:nowrap;letter-spacing:0.42px">Y Offset:</div>
<div class="abs" style="left:288.5px;top:361.4px;font-size:14px;line-height:20px;color:#1e1e1e;white-space:nowrap;letter-spacing:0.50px;width:60.2px;text-align:center">90%</div>
<div class="abs" style="left:288.5px;top:392.0px;font-size:14px;line-height:20px;color:#1e1e1e;white-space:nowrap;letter-spacing:0.50px;width:60.2px;text-align:center">90%</div>
<svg class="abs" style="left:-1px;top:0" width="368" height="794" viewBox="1104 118 368 794" fill="none" stroke-linecap="round" stroke-linejoin="round">
<defs><linearGradient id="gRad" x1="0" y1="0" x2="0" y2="1"><stop offset="0" stop-color="#3a8efa"/><stop offset="1" stop-color="#0b6ff6"/></linearGradient><filter id="ks" x="-40%" y="-40%" width="180%" height="180%"><feDropShadow dx="0" dy=".6" stdDeviation="1" flood-color="#000" flood-opacity=".32"/></filter></defs>
<path d="M1231.100,139.500v11" stroke="#d2d2d2" stroke-width="1"/>
<circle cx="1176" cy="144.800" r="6.400" stroke="#1e1e1e" stroke-width="1.350"/><circle cx="1175.900" cy="141.700" r="1" fill="#1e1e1e"/><path d="M1174.600,144.200h1.700v3.900M1174.200,148.200h3.800" stroke="#1e1e1e" stroke-width="1.200"/>
<g transform="translate(1287.600,144.700) rotate(45)" stroke="#1e1e1e" stroke-width="1.200"><path d="M-4.100,-6.600q0,-.8 .8,-.8h6.600q.8,0 .8,.8v6.400h-8.200zM-4.100,-2.400h8.200M1.300,-7.300v2.400M-4.100,-.2l2.500,2v3.900a1.600,1.600 0 0 0 3.200,0v-3.900l2.500,-2"/><circle cx="0" cy="5.600" r=".35" fill="#1e1e1e" stroke-width=".5"/></g>
<path d="M1394.700,140.100l9.200,4.700l-9.200,4.700z" stroke="#1e1e1e" stroke-width="1.250"/>
<g transform="translate(1148.20,184.40) scale(0.0989)"><g fill="#5856d6"><use href="#cubeBody"/></g><g fill="#5856d6"><use href="#badgeDisc"/></g><use href="#badgePlus"/></g>
<g transform="translate(1228.90,184.40) scale(0.0989)"><g fill="#a9a8ea"><use href="#cubeBody"/></g><g fill="#5856d6"><use href="#badgeDisc"/></g><use href="#badgePlus"/></g>
<g transform="translate(1309.60,184.40) scale(0.0989)"><g fill="#8e8e93"><use href="#cubeBody"/></g><g fill="#5856d6"><use href="#badgeDisc"/></g><use href="#badgePlus"/></g>
<g transform="translate(1390.30,184.40) scale(0.0989)"><g fill="#5856d6"><use href="#cubeBody"/></g><g fill="#28cd41"><use href="#badgeDisc"/></g><use href="#badgePlus"/></g>
<circle cx="1409.200" cy="245.800" r="4" fill="#0a7aff"/>
<g stroke="#7a7a7a" stroke-width="1.050"><path d="M1446.200,288.800h-2.300q-1.500,0 -1.500,1.500v8.300q0,1.500 1.500,1.500h5.600q1.500,0 1.500,-1.500v-.6"/><path d="M1446.300,287.300h2.900l3.600,3.600v5.400q0,1.300 -1.300,1.300h-5.200q-1.300,0 -1.300,-1.300v-7.700q0,-1.300 1.300,-1.300zM1449,287.500v2.400q0,1 1,1h2.600"/></g>
<path d="M1301.800,315.600l3,-2.900l3,2.900M1301.800,319.500l3,2.900l3,-2.900" stroke="#fff" stroke-width="1.500"/>
<path d="M1334.600,312.400l9.400,5l-9.400,5z" fill="#1e1e1e" stroke="#1e1e1e" stroke-width="1"/>
<g stroke="#7a7a7a" stroke-width="1.200"><path d="M1431.300,316.600v-.6q0,-1.900 1.900,-1.900h8.700M1439.900,311.800l2.300,2.300l-2.300,2.300M1443,318v.6q0,1.900 -1.900,1.900h-8.700M1434.400,318.200l-2.300,2.300l2.300,2.300"/></g>
<circle cx="1199.0" cy="359.6" r="7.100" fill="#fff" stroke="#cfcfcf" stroke-width=".8"/>
<circle cx="1199.0" cy="381.1" r="7.300" fill="url(#gRad)"/><circle cx="1199.0" cy="381.1" r="2.800" fill="#fff"/>
<circle cx="1199.0" cy="408.5" r="7.100" fill="#fff" stroke="#cfcfcf" stroke-width=".8"/>
<circle cx="1199.0" cy="430.0" r="7.300" fill="url(#gRad)"/><circle cx="1199.0" cy="430.0" r="2.800" fill="#fff"/>
<g stroke="#7a7a7a" stroke-width="1.100"><path d="M1410.200,462.700a4.300,4.300 0 1 1 -1.300,3.200"/><path d="M1412.800,460.400l-2.500,2.300l2.600,2.100"/></g>
<path d="M1188.500,488.9h193.500" stroke="#e2e2e2" stroke-width="4.200"/><path d="M1188.500,488.9h131" stroke="#0a74f8" stroke-width="4.200"/>
<circle cx="1320" cy="488.9" r="10.200" fill="#fff" filter="url(#ks)"/>
<path d="M1188.500,520.3h193.500" stroke="#e2e2e2" stroke-width="4.200"/><path d="M1188.500,520.3h131" stroke="#0a74f8" stroke-width="4.200"/>
<circle cx="1320" cy="520.3" r="10.200" fill="#fff" filter="url(#ks)"/>
</svg>
</div>
</div>
</body>
</html>
